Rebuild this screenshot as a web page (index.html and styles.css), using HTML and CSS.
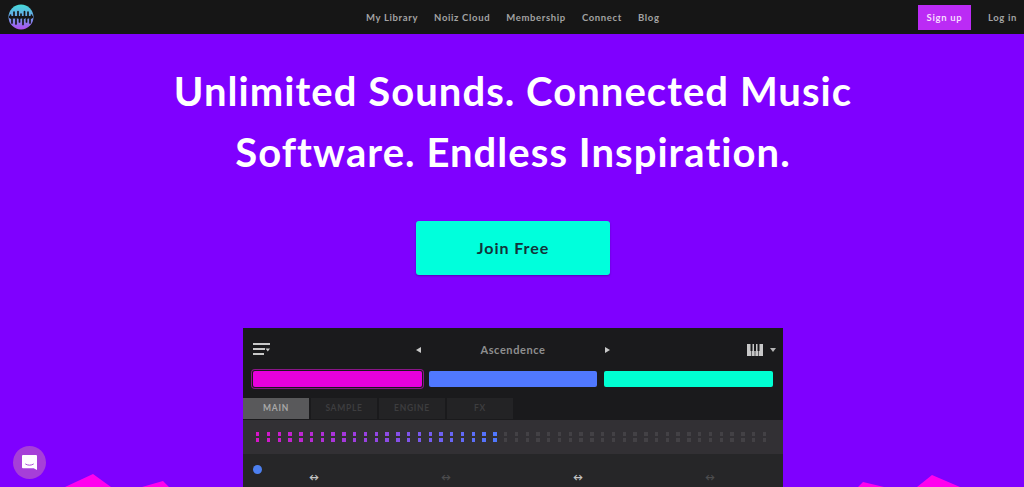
FILE: index.html
```html
<!DOCTYPE html>
<html>
<head>
    <title>Noiiz</title>
    <meta name="viewport" content="width=device-width, initial-scale=1">
    <link rel="stylesheet" href="styles.css">
</head>
<body>
    <div class="nav">
        <svg class="logo" viewBox="0 0 26 26">
            <defs>
                <linearGradient id="logo-grad" x1="0" y1="0" x2="0" y2="1">
                    <stop offset="0" stop-color="#45dcd8"/>
                    <stop offset="0.5" stop-color="#6aa0e8"/>
                    <stop offset="1" stop-color="#b04cf0"/>
                </linearGradient>
            </defs>
            <circle cx="13" cy="13" r="12.5" fill="url(#logo-grad)"/>
            <path d="M2.500 14V11M6 14V8M10 14V7.500M13 14V10M16.500 14V7.500M20 14V8M23.500 14V11M4 14V19M8 14V20M11.500 14V18M15 14V20.500M18.500 14V18M22 14V19" stroke="#161616" stroke-width="1.700" stroke-linecap="round" fill="none"/>
            <rect x="1" y="12" width="24" height="2" fill="#161616"/>
        </svg>
        <div class="nav-links">
            <a>My Library</a>
            <a>Noiiz Cloud</a>
            <a>Membership</a>
            <a>Connect</a>
            <a>Blog</a>
        </div>
        <div class="nav-right">
            <a class="signup">Sign up</a>
            <a class="login">Log in</a>
        </div>
    </div>

    <div class="hero">
        <h1>Unlimited Sounds. Connected Music<br>Software. Endless Inspiration.</h1>
        <a class="join">Join Free</a>

        <div class="plugin">
            <div class="plugin-top">
                <svg class="menu-icon" viewBox="0 0 17 13">
                    <path d="M0 0h17v2H0zM0 5h12v2H0zM0 10h11v2H0zM12.500 5.500h4.500l-2.200 3z" fill="#c8c8c8"/>
                </svg>
                <div class="preset">
                    <span class="arrow-left"></span>
                    <span class="preset-name">Ascendence</span>
                    <span class="arrow-right"></span>
                </div>
                <div class="keys">
                    <svg class="keys-icon" viewBox="0 0 16 12">
                        <path d="M0 0h16v12H0z" fill="#c8c8c8"/>
                        <path d="M3.500 0h2v7h-2zM7 0h2v7H7zM10.500 0h2v7h-2zM4.200 7h.6v5h-.6zM7.700 7h.6v5h-.6zM11.200 7h.6v5h-.6z" fill="#1a1a1c"/>
                    </svg>
                    <span class="caret"></span>
                </div>
            </div>
            <div class="pads">
                <div class="pad pad-pink"></div>
                <div class="pad pad-blue"></div>
                <div class="pad pad-teal"></div>
            </div>
            <div class="tabs">
                <div class="tab active">MAIN</div>
                <div class="tab">SAMPLE</div>
                <div class="tab">ENGINE</div>
                <div class="tab">FX</div>
            </div>
            <div class="steps" id="steps"></div>
            <div class="knobs">
                <span class="knob-dot"></span>
                <div class="knob-row">
                    <span class="link on">&#8596;</span>
                    <span class="link">&#8596;</span>
                    <span class="link on">&#8596;</span>
                    <span class="link">&#8596;</span>
                </div>
            </div>
        </div>
    </div>

    <!-- pink shapes along the bottom edge -->
    <svg class="shapes" viewBox="0 0 1024 14">
        <path d="M65 14 L93 1 L111 14zM142 14 L163 8 L169 14zM858 14 L863 9 L884 14zM917 14 L932 2 L960 14z" fill="#ff00ee"/>
    </svg>

    <div class="chat">
        <svg viewBox="0 0 16 16">
            <path d="M1 0h14a1 1 0 0 1 1 1v15l-3.500-2H1a1 1 0 0 1-1-1V1a1 1 0 0 1 1-1z" fill="#fff"/>
            <path d="M3.500 9.500c2.500 1.800 6.500 1.800 9 0" stroke="#a63fd8" stroke-width="1" fill="none"/>
        </svg>
    </div>

    <script src="script.js"></script>
</body>
</html>
```

FILE: styles.css
```css
* { box-sizing: border-box; }
html, body { height: 100%; }
body { margin: 0; background: #7f00ff; font-family: "Lato", "Liberation Sans", sans-serif; overflow: hidden; position: relative; }

.nav { height: 34px; background: #161616; display: flex; align-items: center; justify-content: space-between; padding: 0 7px 0 8px; position: relative; }
.logo { width: 26px; height: 26px; }
.nav-links { position: absolute; left: 366px; top: 0; height: 34px; display: flex; align-items: center; gap: 16px; }
.nav-links a { color: #a3a3a3; font-size: 9.5px; font-weight: 700; letter-spacing: 0.65px; }
.nav-right { display: flex; align-items: center; }
.signup { background: #bb2bf5; color: #f6dcff; font-size: 9.5px; font-weight: 700; letter-spacing: 0.65px; width: 53px; height: 25px; line-height: 25px; text-align: center; margin-right: 17px; }
.login { color: #a3a3a3; font-size: 9.5px; font-weight: 700; letter-spacing: 0.65px; }

.hero { display: flex; flex-direction: column; align-items: center; padding-left: 2px; }
h1 { margin: 27px 0 0; color: #fff; font-size: 40px; font-weight: 700; line-height: 61px; letter-spacing: 1.05px; text-align: center; }
.join { margin-top: 38px; width: 194px; height: 54px; line-height: 53px; background: #00ffdc; border-radius: 3px; text-align: center; color: #12343a; font-size: 16px; font-weight: 700; letter-spacing: 0.95px; box-shadow: 0 1px 2px rgba(60,0,140,0.6); }

.plugin { margin-top: 53px; width: 540px; height: 159px; background: #1a1a1c; flex-shrink: 0; overflow: hidden; }
.plugin-top { height: 43px; display: flex; align-items: center; justify-content: space-between; padding: 0 7px 0 10px; position: relative; }
.menu-icon { width: 17px; height: 13px; }
.preset { position: absolute; left: 173px; top: 0; width: 194px; height: 43px; display: flex; align-items: center; justify-content: space-between; }
.preset-name { color: #8f8f8f; font-size: 11px; font-weight: 700; letter-spacing: 0.6px; }
.arrow-left { border-right: 5px solid #c8c8c8; border-top: 3px solid transparent; border-bottom: 3px solid transparent; }
.arrow-right { border-left: 5px solid #c8c8c8; border-top: 3px solid transparent; border-bottom: 3px solid transparent; }
.keys { display: flex; align-items: center; gap: 7px; }
.keys-icon { width: 16px; height: 12px; }
.caret { border-top: 4px solid #b5b5b5; border-left: 3px solid transparent; border-right: 3px solid transparent; }

.pads { display: flex; gap: 7px; padding: 0 10px; height: 27px; align-items: flex-start; }
.pad { flex: 1; height: 16px; border-radius: 2px; }
.pad-pink { background: #e600dc; box-shadow: 0 0 0 1px #1a1a1c, 0 0 0 2px #8a1688; }
.pad-blue { background: #5078ff; }
.pad-teal { background: #00ffd2; }

.tabs { display: flex; gap: 2px; height: 21px; }
.tab { width: 66px; background: #232325; color: #3d3d3f; font-size: 8.5px; font-weight: 700; letter-spacing: 0.7px; line-height: 21px; text-align: center; }
.tab.active { background: #59595b; color: #a8a8a8; }

.steps { margin-top: 1px; height: 34px; background: #323034; display: grid; grid-template-columns: repeat(48, 3.400px); grid-template-rows: 4px 4px; column-gap: 7.400px; row-gap: 2.500px; align-content: center; padding: 0 0 0 13px; }
.steps span { background: #434145; }

.knobs { height: 34px; background: #262628; padding-top: 11px; position: relative; }
.knob-dot { display: block; width: 9px; height: 9px; margin-left: 10px; border-radius: 50%; background: #4d80f0; }
.knob-row { position: absolute; left: 66px; top: 16px; display: flex; }
.link { width: 132px; color: #4c4c4e; font-size: 10px; font-weight: 700; line-height: 14px; }
.link.on { color: #c4c4c4; }

.shapes { position: absolute; left: 0; bottom: 0; width: 1024px; height: 14px; }

.chat { position: absolute; left: 13px; top: 446px; width: 33px; height: 33px; border-radius: 50%; background: #a63fd8; display: flex; align-items: center; justify-content: center; }
.chat svg { width: 15px; height: 15px; }
```

FILE: script.js
```js
// step sequencer dots: first 23 fade from pink to blue, the rest are unlit
var steps = document.getElementById('steps');
var h = '';
for (var row = 0; row < 2; row++) {
    for (var i = 0; i < 48; i++) {
        if (i < 23) {
            var t = i / 22;
            var r = Math.round(214 - t * 134);
            var g = Math.round(20 + t * 100);
            var b = Math.round(200 + t * 55);
            h += '<span style="background:rgb(' + r + ',' + g + ',' + b + ')"></span>';
        } else {
            h += '<span></span>';
        }
    }
}
steps.innerHTML = h;
```
